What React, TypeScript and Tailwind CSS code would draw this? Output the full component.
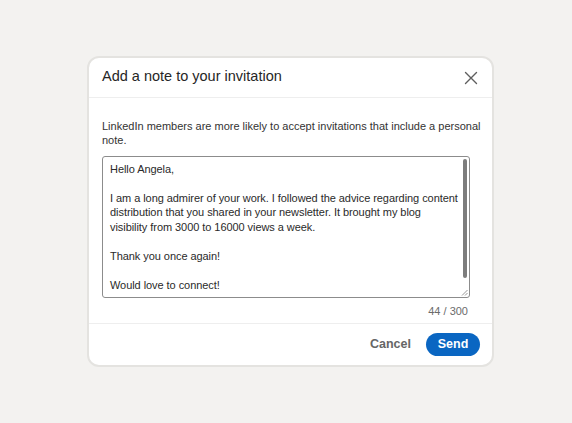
import * as React from "react";

const MESSAGE_LINES = [
  "Hello Angela,",
  "",
  "I am a long admirer of your work. I followed the advice regarding content",
  "distribution that you shared in your newsletter. It brought my blog",
  "visibility from 3000 to 16000 views a week.",
  "",
  "Thank you once again!",
  "",
  "Would love to connect!",
];

function CloseIcon() {
  return (
    <svg width="14" height="14" viewBox="0 0 14 14" fill="none" stroke="#5e5e5e" strokeWidth="1.4" strokeLinecap="round">
      <path d="M1.5 1.5 L12.5 12.5 M12.5 1.5 L1.5 12.5" />
    </svg>
  );
}

function ResizeGrip() {
  return (
    <svg width="7" height="7" viewBox="0 0 7 7" fill="none" stroke="#8a8a8a" strokeWidth="0.9">
      <path d="M6.5 1 L1 6.5 M6.5 4 L4 6.5" />
    </svg>
  );
}

export default function App() {
  return (
    <div
      className="h-[423px] w-full bg-[#f3f2f0] flex items-center justify-center pl-[9px] text-[#1d1d1d]"
      style={{ fontFamily: "'Liberation Sans', Arial, sans-serif" }}
    >
      <div className="w-[407px] bg-white rounded-[12px] border-2 border-[#e4e3e0] flex flex-col">
        {/* Header */}
        <div className="h-[40px] px-[13px] flex items-center justify-between border-b border-[#eeeeee]">
          <h2 className="text-[14.5px] text-[#262626]">Add a note to your invitation</h2>
          <button type="button" aria-label="Dismiss" className="mr-[1px] mt-[1px]">
            <CloseIcon />
          </button>
        </div>

        {/* Body */}
        <div className="pl-[13px] pr-[8px] pt-[21px] pb-[4px]">
          <p className="text-[11px] leading-[14.5px] text-[#333333]">
            LinkedIn members are more likely to accept invitations that include a personal note.
          </p>
          <div className="relative mt-[8px] w-[368px] h-[142px] border border-[#8c8c8c] rounded-[3px] pl-[7px] pr-[4px] pt-[5px] overflow-hidden">
            <div className="text-[11px] leading-[14.5px] tracking-[-0.06px] text-[#2a2a2a] whitespace-pre">
              {MESSAGE_LINES.join("\n")}
            </div>
            <div className="absolute right-[2px] top-[2px] w-[4px] h-[119px] rounded-full bg-[#7d7d7d]" />
            <div className="absolute right-[1px] bottom-[1px]">
              <ResizeGrip />
            </div>
          </div>
          <div className="w-[368px] text-right text-[11px] text-[#6b6b6b] mt-[5px] pr-[2px]">44 / 300</div>
        </div>

        {/* Footer */}
        <div className="h-[42px] border-t border-[#eeeeee] px-[12px] flex items-center justify-end gap-[15px]">
          <button type="button" className="text-[12.5px] font-semibold text-[#666666]">Cancel</button>
          <button
            type="button"
            className="h-[23px] w-[54px] rounded-full bg-[#0a66c2] text-white text-[12.5px] font-semibold"
          >
            Send
          </button>
        </div>
      </div>
    </div>
  );
}
